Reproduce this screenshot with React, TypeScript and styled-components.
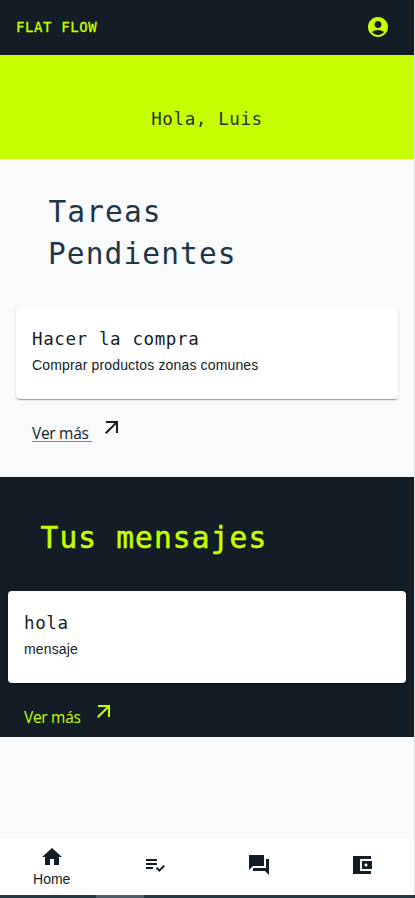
import React from "react";
import styled, { createGlobalStyle } from "styled-components";

const ink = "#131d25";
const lime = "#c8ff00";
const navy = "#213547";
const mono = '"DejaVu Sans Mono", monospace';
const sans = '"Liberation Sans", Arial, sans-serif';

const GlobalStyle = createGlobalStyle`
  * { box-sizing: border-box; }
  body { margin: 0; background: #f9fafc; overflow: hidden; }
  h1, h2, h3, p { margin: 0; font-weight: 400; }
`;

const Page = styled.div`
  display: flex;
  flex-direction: column;
  height: 898px;
  width: 415px;
`;

const Screen = styled.div`
  flex: 1;
  display: flex;
  flex-direction: column;
  border-right: 1px solid #e2e3e5;
  background: #f9fafc;
  color: ${ink};
`;

const TopBar = styled.header`
  height: 55px;
  padding: 0 24px 1px 16px;
  display: flex;
  align-items: center;
  justify-content: space-between;
  background: ${ink};
  color: ${lime};
`;

const Brand = styled.span`
  font: 14px/20px ${mono};
  letter-spacing: 0.6px;
  -webkit-text-stroke: 0.3px currentColor;
`;

const Greeting = styled.section`
  height: 104px;
  padding-top: 48px;
  background: ${lime};
  color: ${navy};
  text-align: center;
`;

const GreetingText = styled.h1`
  font: 17.5px/32px ${mono};
  letter-spacing: 0.62px;
`;

const Section = styled.section<{ $dark?: boolean }>`
  height: ${(p) => (p.$dark ? 260 : 318)}px;
  padding: ${(p) => (p.$dark ? "40px 8px 0" : "32px 16px 0")};
  background: ${(p) => (p.$dark ? ink : "transparent")};
  color: ${(p) => (p.$dark ? lime : ink)};
`;

const Heading = styled.h2<{ $dark?: boolean }>`
  width: 260px;
  margin: 0 0 32px 32px;
  font: 29.5px/42px ${mono};
  letter-spacing: ${(p) => (p.$dark ? 1.15 : 1.1)}px;
  text-indent: 0.5px;
  color: ${(p) => (p.$dark ? lime : navy)};
  -webkit-text-stroke: ${(p) => (p.$dark ? 0.5 : 0)}px currentColor;
  white-space: pre-line;
`;

const Card = styled.article`
  height: 92px;
  padding: 16px;
  border-radius: 4px;
  background: #fff;
  color: ${ink};
  box-shadow: 0 2px 1px -1px rgba(0, 0, 0, 0.2), 0 1px 1px rgba(0, 0, 0, 0.14),
    0 1px 3px rgba(0, 0, 0, 0.12);
`;

const CardTitle = styled.h3`
  font: 17.5px/32px ${mono};
  letter-spacing: 0.62px;
`;

const CardText = styled.p`
  font: 14px/20px ${sans};
  letter-spacing: 0.15px;
`;

const More = styled.div`
  display: flex;
  align-items: flex-start;
  gap: 8px;
  padding: 16px 0 0 16px;
`;

const MoreLink = styled.a<{ $underlined?: boolean }>`
  width: 60px;
  margin-top: 6px;
  font: 15.5px/24px "Open Sans", sans-serif;
  letter-spacing: -0.3px;
  white-space: pre;
  text-decoration: ${(p) => (p.$underlined ? "underline" : "none")};
  text-decoration-color: #7e858b;
  text-decoration-thickness: 1px;
  text-underline-offset: 2px;
`;

const BottomNav = styled.nav`
  height: 56px;
  margin-top: auto;
  display: grid;
  grid-template-columns: repeat(4, 1fr);
  background: #fff;
`;

const NavItem = styled.button<{ $active?: boolean }>`
  display: flex;
  flex-direction: column;
  align-items: center;
  justify-content: center;
  padding: 0 0 ${(p) => (p.$active ? 0 : 4)}px;
  border: 0;
  background: none;
  color: ${ink};
`;

const NavLabel = styled.span`
  font: 14px/20px ${sans};
`;

const ScrollTrack = styled.div`
  height: 3px;
  padding-left: 96px;
  background: #243742;
`;

const ScrollThumb = styled.div`
  width: 48px;
  height: 3px;
  background: #505d66;
`;

const Svg = styled.svg`
  display: block;
  flex: none;
  width: 24px;
  height: 24px;
  fill: currentColor;
`;

const paths = {
  account:
    "M12 2C6.48 2 2 6.48 2 12s4.48 10 10 10 10-4.48 10-10S17.52 2 12 2m0 4c1.93 0 3.5 1.57 3.5 3.5S13.93 13 12 13s-3.5-1.57-3.5-3.5S10.07 6 12 6m0 14c-2.03 0-4.43-.82-6.14-2.88C7.55 15.8 9.68 15 12 15s4.45.8 6.14 2.12C16.43 19.18 14.03 20 12 20",
  arrow: "M6 6v2h8.59L5 17.59 6.41 19 16 9.41V18h2V6z",
  home: "M10 20v-6h4v6h5v-8h3L12 3 2 12h3v8z",
  tasks:
    "M3 10h11v2H3zm0-4h11v2H3zm0 8h7v2H3zm17.59-2.07-4.25 4.24-2.12-2.12-1.41 1.41L16.34 19 22 13.34z",
  forum: "M22 6h-3v9H6v3h12l4 4zm-5 7V2H2v15l4-4z",
  wallet:
    "M21 18v3H3V3h18v3H10v12zm-9-2h10V8H12zm4-2.5c-.83 0-1.5-.67-1.5-1.5s.67-1.5 1.5-1.5 1.5.67 1.5 1.5-.67 1.5-1.5 1.5",
};

function Icon({ name }: { name: keyof typeof paths }) {
  return (
    <Svg viewBox="0 0 24 24" aria-hidden="true">
      <path d={paths[name]} />
    </Svg>
  );
}

interface PanelProps {
  heading: string;
  title: string;
  text: string;
  dark?: boolean;
}

function Panel({ heading, title, text, dark }: PanelProps) {
  return (
    <Section $dark={dark}>
      <Heading $dark={dark}>{heading}</Heading>
      <Card>
        <CardTitle>{title}</CardTitle>
        <CardText>{text}</CardText>
      </Card>
      <More>
        <MoreLink $underlined={!dark}>{"Ver más "}</MoreLink>
        <Icon name="arrow" />
      </More>
    </Section>
  );
}

export default function App() {
  return (
    <Page>
      <GlobalStyle />
      <Screen>
        <TopBar>
          <Brand>FLAT FLOW</Brand>
          <Icon name="account" />
        </TopBar>
        <Greeting>
          <GreetingText>Hola, Luis</GreetingText>
        </Greeting>
        <Panel
          heading={"Tareas\nPendientes"}
          title="Hacer la compra"
          text="Comprar productos zonas comunes"
        />
        <Panel dark heading="Tus mensajes" title="hola" text="mensaje" />
        <BottomNav>
          <NavItem $active>
            <Icon name="home" />
            <NavLabel>Home</NavLabel>
          </NavItem>
          <NavItem aria-label="Tareas">
            <Icon name="tasks" />
          </NavItem>
          <NavItem aria-label="Mensajes">
            <Icon name="forum" />
          </NavItem>
          <NavItem aria-label="Gastos">
            <Icon name="wallet" />
          </NavItem>
        </BottomNav>
      </Screen>
      <ScrollTrack>
        <ScrollThumb />
      </ScrollTrack>
    </Page>
  );
}
